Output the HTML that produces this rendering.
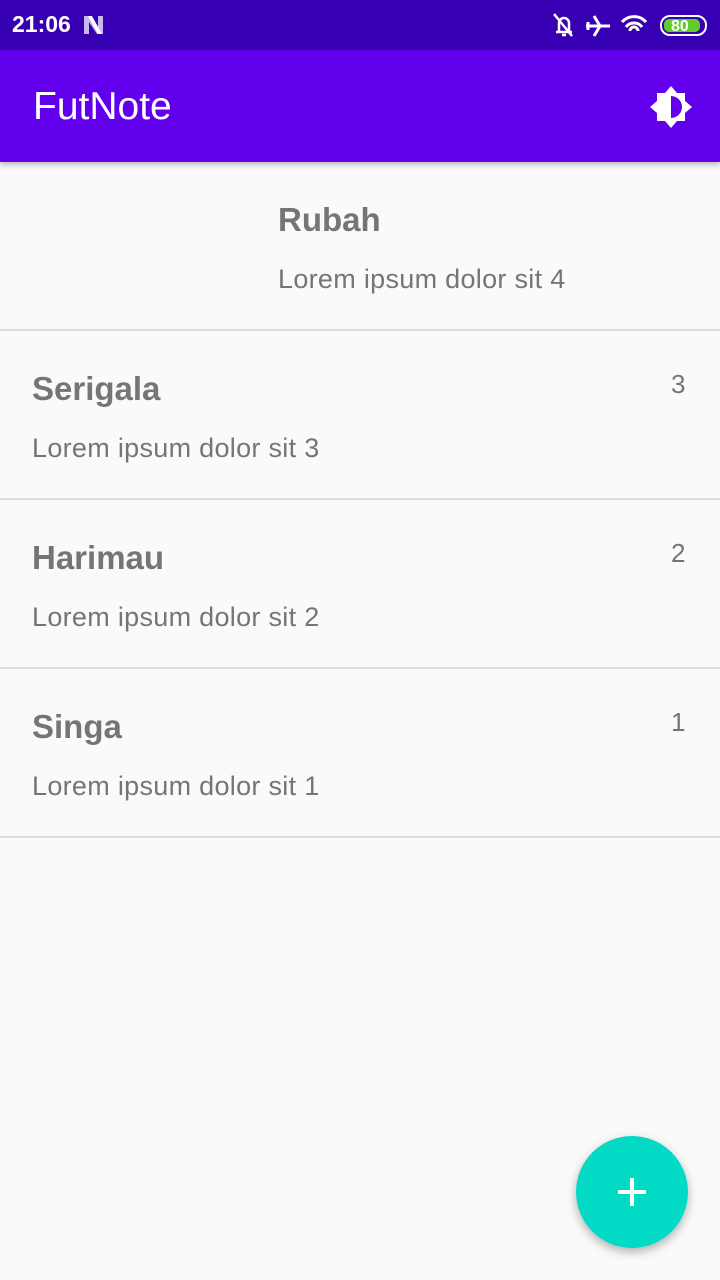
<!DOCTYPE html>
<html><head><meta charset="utf-8"><style>
body{margin:0;width:720px;height:1280px;background:#fafafa;font-family:"Liberation Sans",Roboto,sans-serif;position:relative;overflow:hidden}
.sb{position:absolute;left:0;top:0;width:720px;height:50px;background:#3700b3;color:#fff}
.tb{position:absolute;left:0;top:50px;width:720px;height:112px;background:#6200ee;box-shadow:0 3px 5px rgba(0,0,0,.25)}
.t{position:absolute;color:#757575;white-space:nowrap}
.ti{font-weight:bold;font-size:33px}
.su{font-size:27px;letter-spacing:0.3px}
.n{font-size:26px}
.d{position:absolute;left:0;width:720px;height:2px;background:#dcdcdc}
.fab{position:absolute;left:576px;top:1136px;width:112px;height:112px;border-radius:50%;background:#03dac5;box-shadow:0 4px 10px rgba(0,0,0,.3)}
</style></head><body>
<div class="sb">
<div style="position:absolute;left:12px;top:11px;font-size:23px;font-weight:bold">21:06</div>
<svg style="position:absolute;left:83px;top:15px" width="22" height="20"><path d="M1 1h6l8 12V1h5v18h-6L6 7v12H1z" fill="#c8b8f0"/><path d="M5 1h4l10 18h-4z" fill="#fff"/></svg>
<svg style="position:absolute;left:550px;top:12px" width="160" height="28" fill="none" stroke="#fff" stroke-width="2.5">
<path d="M6 20h16M9 20V11a5 5 0 0 1 10 0v9M4 2l18 22M12 23h4"/>
<path d="M36 14h24M44 4l6 10-6 10M38 10v8" stroke-width="3"/>
<path d="M72 10a16 16 0 0 1 24 0M76 15a10 10 0 0 1 16 0M80 19a4 4 0 0 1 8 0" stroke-width="3"/>
<rect x="111" y="4" width="45" height="19" rx="9" stroke-width="2"/>
<rect x="114" y="7" width="36" height="13" rx="5" fill="#5fce2a" stroke="none"/>
<text x="121" y="19" font-size="16" font-weight="bold" fill="#fff" stroke="none" font-family="Liberation Sans">80</text>
</svg>
</div>
<div class="tb">
<div style="position:absolute;left:33px;top:35px;font-size:39px;color:#fff">FutNote</div>
<svg style="position:absolute;left:648px;top:34px" width="46" height="46"><path d="M23 2l6 7h8v8l7 6-7 6v8h-8l-6 7-6-7H9v-8l-7-6 7-6V9h8z" fill="#fff"/><path d="M23 12a11 11 0 0 1 0 22z" fill="#6200ee"/></svg>
</div>
<div class="t ti" style="left:278px;top:201px">Rubah</div>
<div class="t su" style="left:278px;top:264px">Lorem ipsum dolor sit 4</div>
<div class="d" style="top:329px"></div>
<div class="t ti" style="left:32px;top:370px">Serigala</div>
<div class="t su" style="left:32px;top:433px">Lorem ipsum dolor sit 3</div>
<div class="t n" style="left:671px;top:369px">3</div>
<div class="d" style="top:498px"></div>
<div class="t ti" style="left:32px;top:539px">Harimau</div>
<div class="t su" style="left:32px;top:602px">Lorem ipsum dolor sit 2</div>
<div class="t n" style="left:671px;top:538px">2</div>
<div class="d" style="top:667px"></div>
<div class="t ti" style="left:32px;top:708px">Singa</div>
<div class="t su" style="left:32px;top:771px">Lorem ipsum dolor sit 1</div>
<div class="t n" style="left:671px;top:707px">1</div>
<div class="d" style="top:836px"></div>
<div class="fab"><svg width="112" height="112"><path d="M56 42v28M42 56h28" stroke="#fff" stroke-width="4"/></svg></div>
</body></html>
